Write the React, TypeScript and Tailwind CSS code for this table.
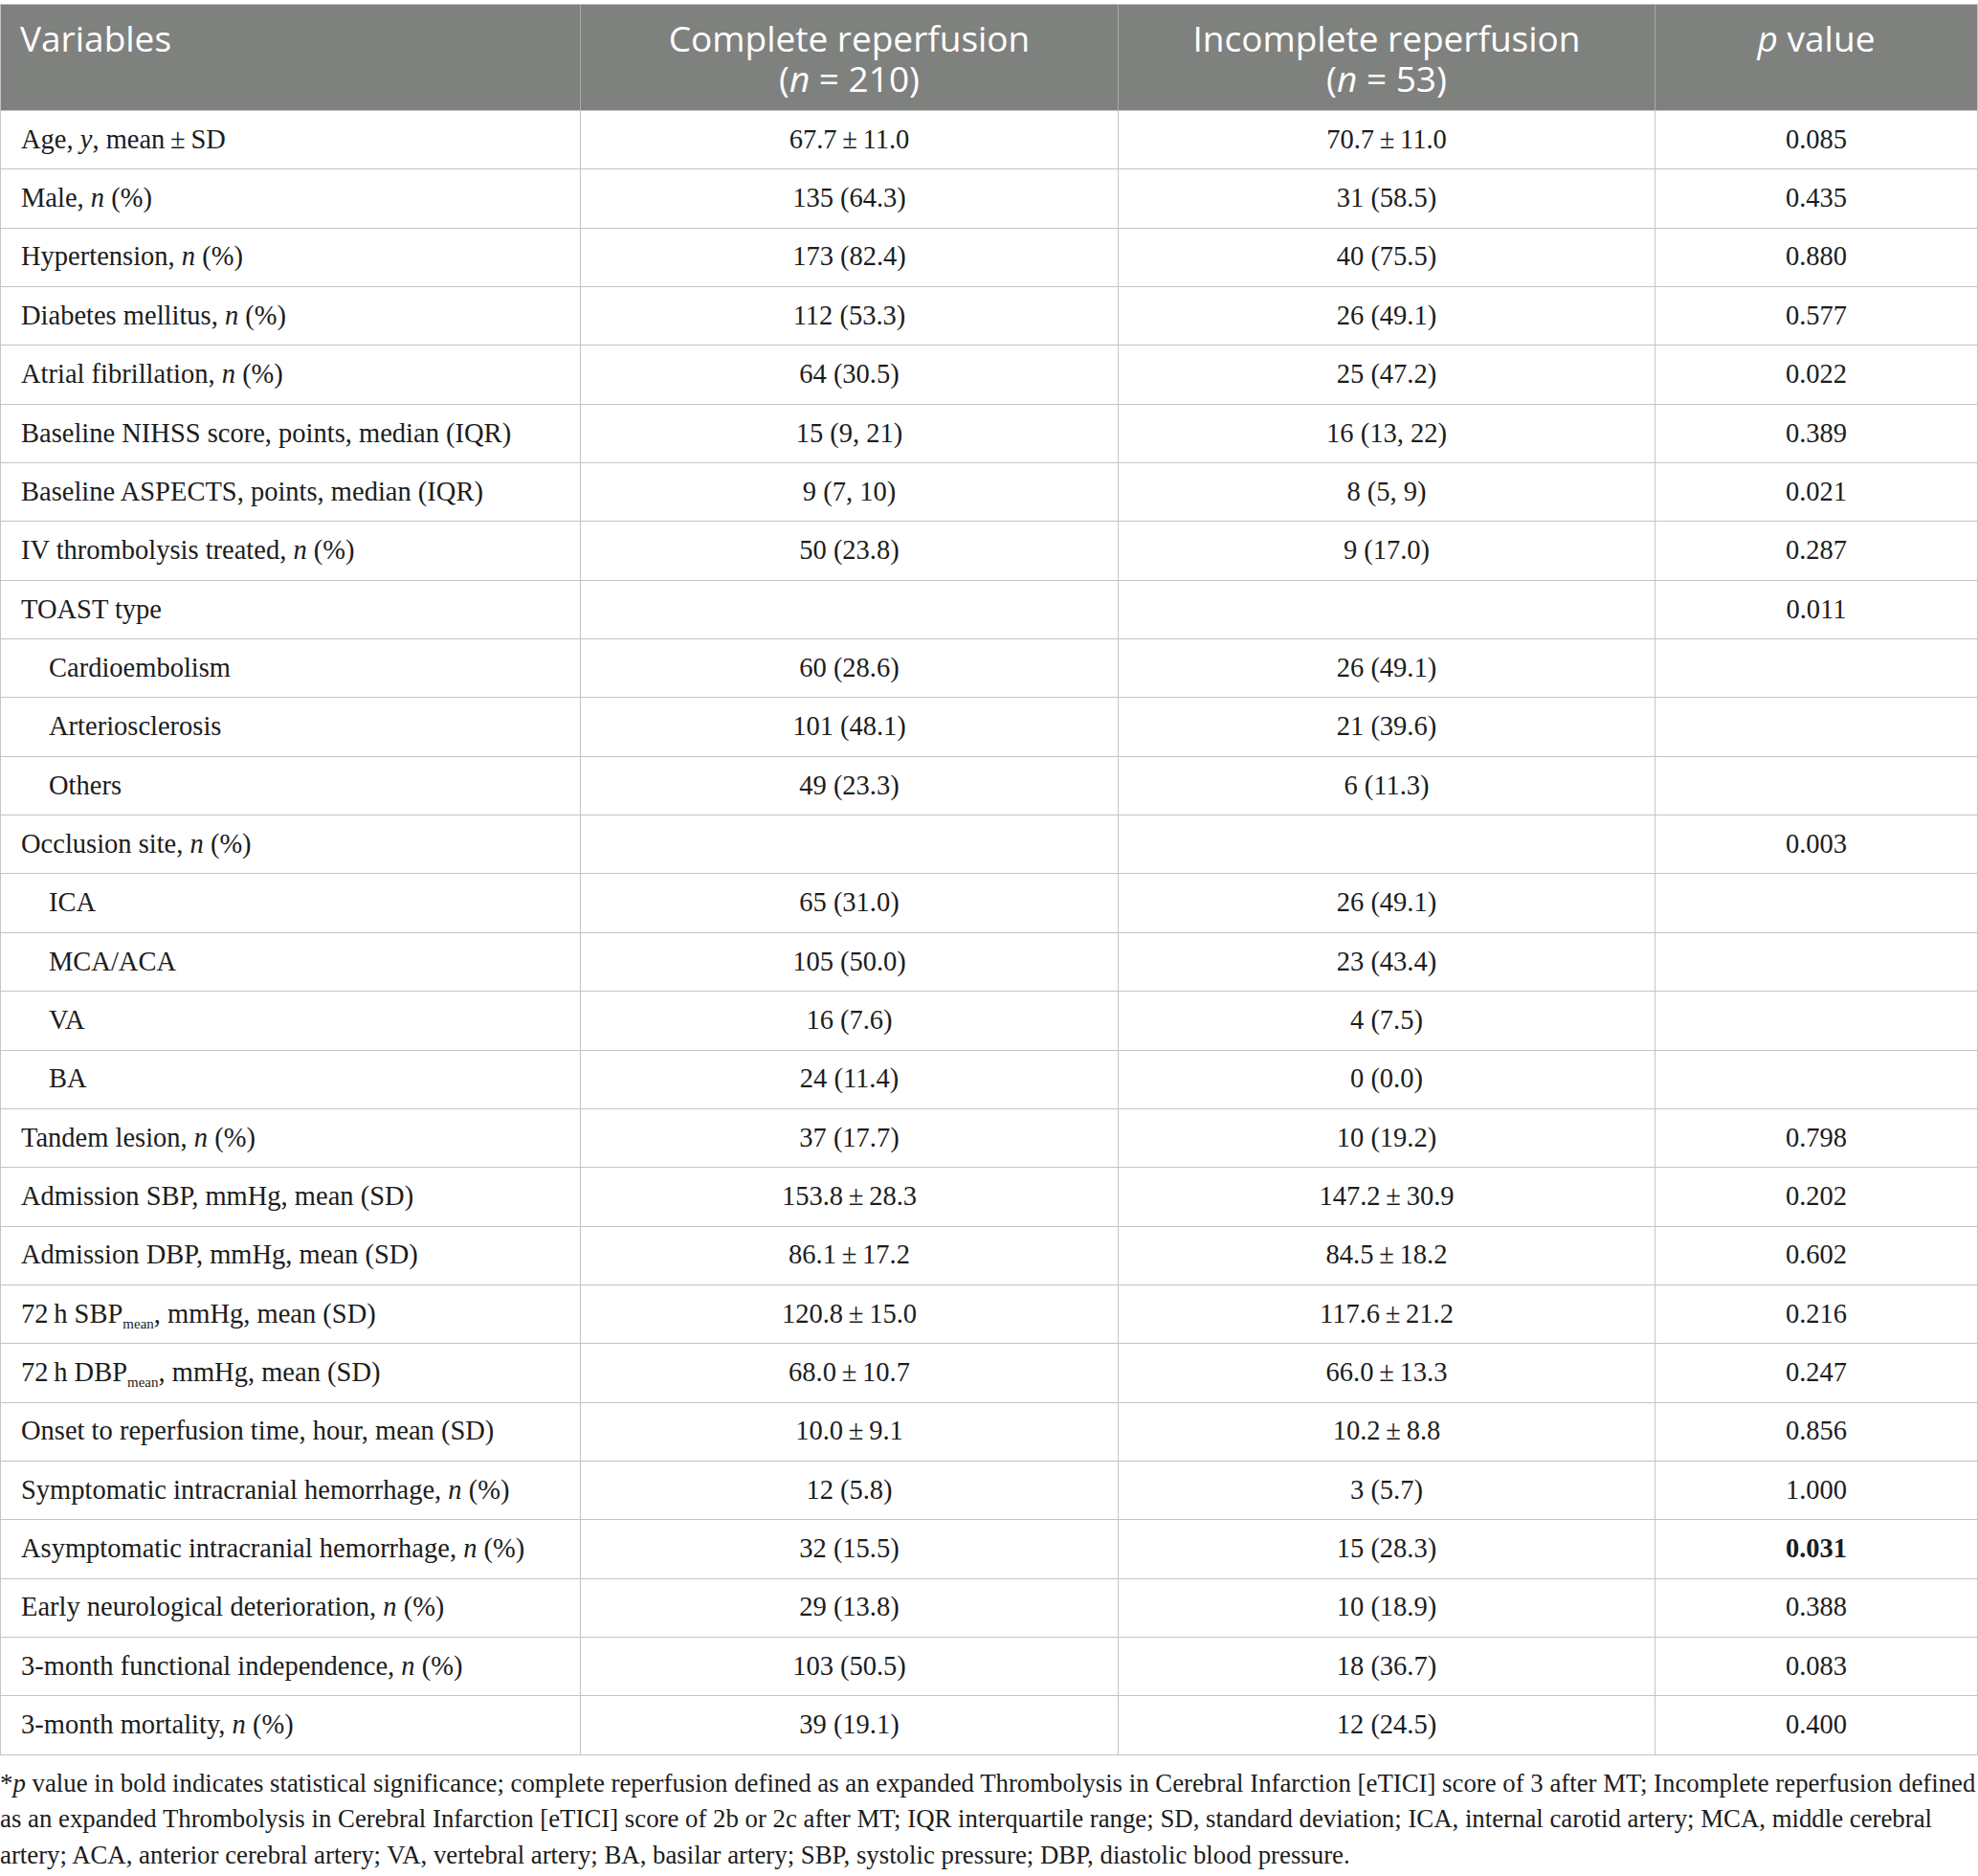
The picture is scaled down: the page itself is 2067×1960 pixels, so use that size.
import React from 'react';

type Row = {
  label: React.ReactNode;
  complete?: string;
  incomplete?: string;
  p?: string;
  indent?: boolean;
  bold?: boolean;
};

const I = ({ children }: { children: React.ReactNode }) => <i>{children}</i>;

const Sub = () => <sub className="text-[15px] align-baseline relative top-[6px]">mean</sub>;

const rows: Row[] = [
  { label: <>Age, <I>y</I>, mean{'\u2009'}±{'\u2009'}SD</>, complete: '67.7\u2009±\u200911.0', incomplete: '70.7\u2009±\u200911.0', p: '0.085' },
  { label: <>Male, <I>n</I> (%)</>, complete: '135 (64.3)', incomplete: '31 (58.5)', p: '0.435' },
  { label: <>Hypertension, <I>n</I> (%)</>, complete: '173 (82.4)', incomplete: '40 (75.5)', p: '0.880' },
  { label: <>Diabetes mellitus, <I>n</I> (%)</>, complete: '112 (53.3)', incomplete: '26 (49.1)', p: '0.577' },
  { label: <>Atrial fibrillation, <I>n</I> (%)</>, complete: '64 (30.5)', incomplete: '25 (47.2)', p: '0.022' },
  { label: 'Baseline NIHSS score, points, median (IQR)', complete: '15 (9, 21)', incomplete: '16 (13, 22)', p: '0.389' },
  { label: 'Baseline ASPECTS, points, median (IQR)', complete: '9 (7, 10)', incomplete: '8 (5, 9)', p: '0.021' },
  { label: <>IV thrombolysis treated, <I>n</I> (%)</>, complete: '50 (23.8)', incomplete: '9 (17.0)', p: '0.287' },
  { label: 'TOAST type', p: '0.011' },
  { label: 'Cardioembolism', complete: '60 (28.6)', incomplete: '26 (49.1)', indent: true },
  { label: 'Arteriosclerosis', complete: '101 (48.1)', incomplete: '21 (39.6)', indent: true },
  { label: 'Others', complete: '49 (23.3)', incomplete: '6 (11.3)', indent: true },
  { label: <>Occlusion site, <I>n</I> (%)</>, p: '0.003' },
  { label: 'ICA', complete: '65 (31.0)', incomplete: '26 (49.1)', indent: true },
  { label: 'MCA/ACA', complete: '105 (50.0)', incomplete: '23 (43.4)', indent: true },
  { label: 'VA', complete: '16 (7.6)', incomplete: '4 (7.5)', indent: true },
  { label: 'BA', complete: '24 (11.4)', incomplete: '0 (0.0)', indent: true },
  { label: <>Tandem lesion, <I>n</I> (%)</>, complete: '37 (17.7)', incomplete: '10 (19.2)', p: '0.798' },
  { label: 'Admission SBP, mmHg, mean (SD)', complete: '153.8\u2009±\u200928.3', incomplete: '147.2\u2009±\u200930.9', p: '0.202' },
  { label: 'Admission DBP, mmHg, mean (SD)', complete: '86.1\u2009±\u200917.2', incomplete: '84.5\u2009±\u200918.2', p: '0.602' },
  { label: <>72{'\u2009'}h SBP<Sub />, mmHg, mean (SD)</>, complete: '120.8\u2009±\u200915.0', incomplete: '117.6\u2009±\u200921.2', p: '0.216' },
  { label: <>72{'\u2009'}h DBP<Sub />, mmHg, mean (SD)</>, complete: '68.0\u2009±\u200910.7', incomplete: '66.0\u2009±\u200913.3', p: '0.247' },
  { label: 'Onset to reperfusion time, hour, mean (SD)', complete: '10.0\u2009±\u20099.1', incomplete: '10.2\u2009±\u20098.8', p: '0.856' },
  { label: <>Symptomatic intracranial hemorrhage, <I>n</I> (%)</>, complete: '12 (5.8)', incomplete: '3 (5.7)', p: '1.000' },
  { label: <>Asymptomatic intracranial hemorrhage, <I>n</I> (%)</>, complete: '32 (15.5)', incomplete: '15 (28.3)', p: '0.031', bold: true },
  { label: <>Early neurological deterioration, <I>n</I> (%)</>, complete: '29 (13.8)', incomplete: '10 (18.9)', p: '0.388' },
  { label: <>3-month functional independence, <I>n</I> (%)</>, complete: '103 (50.5)', incomplete: '18 (36.7)', p: '0.083' },
  { label: <>3-month mortality, <I>n</I> (%)</>, complete: '39 (19.1)', incomplete: '12 (24.5)', p: '0.400' },
];

const grid = 'grid grid-cols-[605px_562px_561px_1fr]';

export default function App() {
  return (
    <div className="w-[2067px] bg-white pt-[4px] text-[#1c1c1c] font-['Liberation_Serif',serif]">
      <div className="border border-[#c4c4c4]">
        {/* header */}
        <div className={`${grid} h-[110px] bg-[#7f817f] text-white text-[37px] leading-[42px] font-['Open_Sans',sans-serif]`}>
          <div className="pl-[20px] pt-[14px]">Variables</div>
          <div className="border-l border-[#a8aaa8] pt-[14px] text-center">
            <div>Complete reperfusion</div>
            <div>(<i>n</i> = 210)</div>
          </div>
          <div className="border-l border-[#a8aaa8] pt-[14px] text-center">
            <div>Incomplete reperfusion</div>
            <div>(<i>n</i> = 53)</div>
          </div>
          <div className="border-l border-[#a8aaa8] pt-[14px] text-center">
            <i>p</i> value
          </div>
        </div>

        {/* body */}
        {rows.map((r, idx) => (
          <div
            key={idx}
            className={`${grid} h-[61.35px] text-[28.5px] border-t border-[#c4c4c4]`}
          >
            <div className={`flex items-center ${r.indent ? 'pl-[50px]' : 'pl-[21px]'}`}>
              <span>{r.label}</span>
            </div>
            <div className="flex items-center justify-center border-l border-[#c4c4c4]">{r.complete}</div>
            <div className="flex items-center justify-center border-l border-[#c4c4c4]">{r.incomplete}</div>
            <div className={`flex items-center justify-center border-l border-[#c4c4c4] ${r.bold ? 'font-bold' : ''}`}>
              {r.p}
            </div>
          </div>
        ))}
      </div>

      {/* footnote */}
      <div className="pt-[11px] text-[26.8px] leading-[37.5px] whitespace-nowrap">
        <div>
          *<i>p</i> value in bold indicates statistical significance; complete reperfusion defined as an expanded Thrombolysis in Cerebral Infarction [eTICI] score of 3 after MT; Incomplete reperfusion defined
        </div>
        <div>
          as an expanded Thrombolysis in Cerebral Infarction [eTICI] score of 2b or 2c after MT; IQR interquartile range; SD, standard deviation; ICA, internal carotid artery; MCA, middle cerebral
        </div>
        <div>
          artery; ACA, anterior cerebral artery; VA, vertebral artery; BA, basilar artery; SBP, systolic pressure; DBP, diastolic blood pressure.
        </div>
      </div>
    </div>
  );
}
